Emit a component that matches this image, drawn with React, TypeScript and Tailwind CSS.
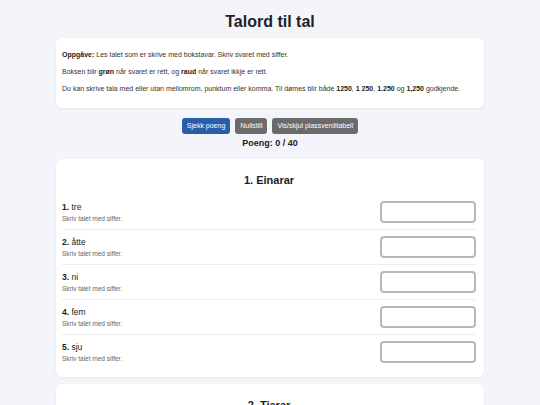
const rows: { [key: string]: string[] } = {
  "1. Einarar": ["tre", "åtte", "ni", "fem", "sju"],
  "2. Tiarar": ["tjueto", "førtifem", "sytti", "trettiåtte", "nittini"],
};

function Row({ n, word, last }: { n: number; word: string; last: boolean }) {
  return (
    <div
      className={`flex items-center justify-between py-[6px] ${last ? "" : "border-b border-[#ececf0]"}`}
    >
      <div className="flex flex-col">
        <span className="text-[8.5px] leading-[11px] text-[#222]">
          <b>{n}.</b> {word}
        </span>
        <span className="mt-[1px] text-[6.5px] leading-[9px] text-[#666]">
          Skriv talet med siffer.
        </span>
      </div>
      <input
        type="text"
        className="h-[22px] w-[96px] rounded-[4px] border-2 border-[#b8b8b8] bg-white outline-none"
      />
    </div>
  );
}

function Section({ title, words }: { title: string; words: string[] }) {
  return (
    <section className="rounded-[6px] bg-white px-[6px] pt-[14px] pb-[8px] pr-[8px] shadow-[0_1px_3px_rgba(0,0,0,0.06)]">
      <h2 className="mb-[8px] text-center text-[11px] font-bold leading-[14px] text-[#222]">
        {title}
      </h2>
      {words.map((w, i) => (
        <Row key={w} n={i + 1} word={w} last={i === words.length - 1} />
      ))}
    </section>
  );
}

export default function App() {
  return (
    <div className="min-h-screen bg-[#f4f4fb] font-['Liberation_Sans',Arial,sans-serif] text-[#222]">
      <div className="mx-auto flex w-[428px] flex-col pt-[12px] pb-[20px]">
        <h1 className="text-center text-[16px] font-bold leading-[20px] text-[#222]">
          Talord til tal
        </h1>

        <div className="mt-[6px] flex flex-col gap-[7px] rounded-[6px] bg-white px-[6px] pt-[12px] pb-[14px] text-[7px] leading-[10px] text-[#333] shadow-[0_1px_3px_rgba(0,0,0,0.06)]">
          <p>
            <b className="text-[#222]">Oppgåve:</b> Les talet som er skrive med bokstavar. Skriv svaret med siffer.
          </p>
          <p>
            Boksen blir <b className="text-[#222]">grøn</b> når svaret er rett, og{" "}
            <b className="text-[#222]">raud</b> når svaret ikkje er rett.
          </p>
          <p>
            Du kan skrive tala med eller utan mellomrom, punktum eller komma. Til dømes blir både{" "}
            <b className="text-[#222]">1250</b>, <b className="text-[#222]">1 250</b>,{" "}
            <b className="text-[#222]">1.250</b> og <b className="text-[#222]">1,250</b> godkjende.
          </p>
        </div>

        <div className="mt-[10px] flex justify-center gap-[5px]">
          <button className="h-[16px] rounded-[3px] bg-[#2a5caa] px-[5px] text-[7px] text-white">
            Sjekk poeng
          </button>
          <button className="h-[16px] rounded-[3px] bg-[#6b6b6b] px-[5px] text-[7px] text-white">
            Nullstill
          </button>
          <button className="h-[16px] rounded-[3px] bg-[#6b6b6b] px-[5px] text-[7px] text-white">
            Vis/skjul plassverditabell
          </button>
        </div>

        <p className="mt-[3px] text-center text-[9px] font-bold leading-[12px] text-[#222]">
          Poeng: 0 / 40
        </p>

        <div className="mt-[10px] flex flex-col gap-[7px]">
          {Object.entries(rows).map(([t, ws]) => (
            <Section key={t} title={t} words={ws} />
          ))}
        </div>
      </div>
    </div>
  );
}
